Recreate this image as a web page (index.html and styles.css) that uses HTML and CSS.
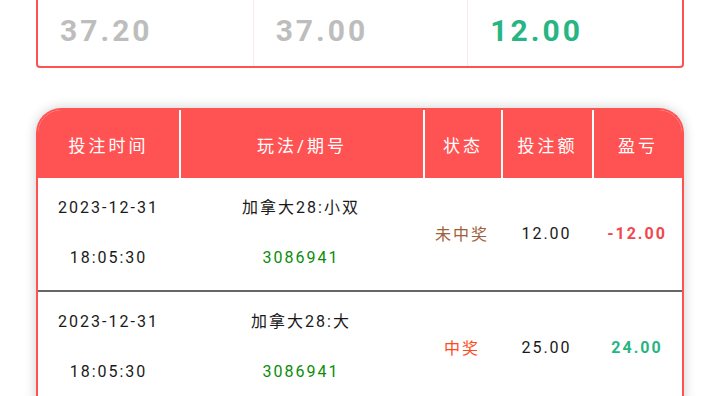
FILE: index.html
```html
<!DOCTYPE html>
<html lang="zh">
<head>
<meta charset="utf-8">
<link rel="stylesheet" href="styles.css">
</head>
<body>
<div class="page">
  <div class="summary">
    <div class="sum-cell"><span class="sum-val muted">37.20</span></div>
    <div class="sum-cell"><span class="sum-val muted">37.00</span></div>
    <div class="sum-cell"><span class="sum-val win">12.00</span></div>
  </div>

  <div class="table">
    <div class="thead">
      <div class="th">投注时间</div>
      <div class="th">玩法/期号</div>
      <div class="th">状态</div>
      <div class="th">投注额</div>
      <div class="th">盈亏</div>
    </div>
    <div class="row">
      <div class="td stack"><span>2023-12-31</span><span>18:05:30</span></div>
      <div class="td stack"><span>加拿大28:小双</span><span class="issue">3086941</span></div>
      <div class="td status lose">未中奖</div>
      <div class="td">12.00</div>
      <div class="td pl neg">-12.00</div>
    </div>
    <div class="row">
      <div class="td stack"><span>2023-12-31</span><span>18:05:30</span></div>
      <div class="td stack"><span>加拿大28:大</span><span class="issue">3086941</span></div>
      <div class="td status hit">中奖</div>
      <div class="td">25.00</div>
      <div class="td pl pos">24.00</div>
    </div>
  </div>
</div>
</body>
</html>
```

FILE: styles.css
```css
* { box-sizing: border-box; }
html, body {
  margin: 0;
  padding: 0;
  background: #fff;
  overflow: hidden;
}
body {
  font-family: Roboto, "Noto Sans CJK SC", sans-serif;
  color: #1a1a1a;
}
.page {
  padding: 0 36px;
}
.summary {
  margin-top: -40px;
  height: 108px;
  border: 2px solid #ff5353;
  border-radius: 4px;
  display: grid;
  grid-template-columns: repeat(3, 1fr);
}
.sum-cell {
  padding: 51px 0 0 22px;
}
.sum-cell + .sum-cell {
  border-left: 1px solid #fde6e6;
}
.sum-val {
  font-size: 30px;
  line-height: 36px;
  font-weight: 700;
  letter-spacing: 3px;
}
.muted { color: #bdbdbd; }
.win { color: #27b584; }

.table {
  margin-top: 40px;
  border: 2px solid #ff5353;
  border-bottom: none;
  border-radius: 25px 25px 0 0;
  box-shadow: 0 0 12px rgba(0, 0, 0, 0.2);
  background: #fff;
  overflow: hidden;
}
.thead, .row {
  display: grid;
  grid-template-columns: 141px 244px 78px 91px 90px;
}
.thead {
  background: #ff5353;
  height: 68px;
}
.th {
  color: #fff;
  font-size: 17px;
  letter-spacing: 3px;
  display: flex;
  align-items: center;
  justify-content: center;
}
.th + .th {
  border-left: 2px solid #fff;
}
.row {
  padding: 5px 0 7px;
  border-bottom: 2px solid #666;
}
.td {
  font-size: 16px;
  letter-spacing: 2px;
  display: flex;
  align-items: center;
  justify-content: center;
}
.td.stack {
  flex-direction: column;
}
.td.stack span {
  line-height: 50px;
}
.issue { color: #0a8c0a; }
.status.lose { color: #a0603a; }
.status.hit { color: #ff4a1a; }
.pl { font-weight: 700; }
.pl.neg { color: #f0474f; }
.pl.pos { color: #27b584; }
```
